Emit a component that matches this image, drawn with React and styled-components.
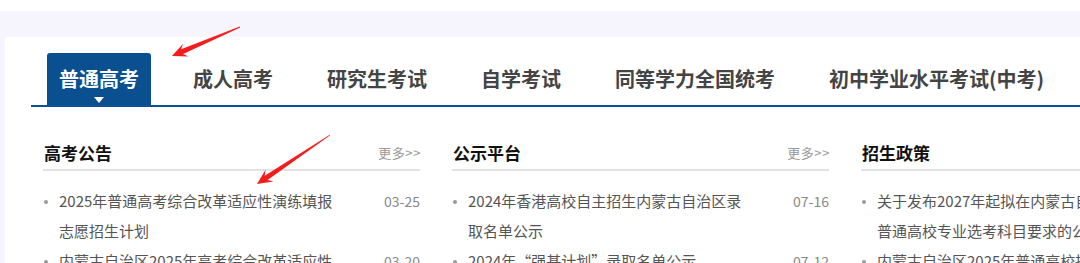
import React from "react";
import styled, { createGlobalStyle } from "styled-components";

const Global = createGlobalStyle`
  html, body { margin: 0; padding: 0; background: #fff; overflow: hidden; }
  body { font-family: "Noto Sans CJK SC", "Noto Sans", sans-serif; }
  * { box-sizing: border-box; }
`;

const Page = styled.div`
  position: relative;
  width: 1080px;
  height: 263px;
  overflow: hidden;
  display: flex;
  flex-direction: column;
`;

const TopStrip = styled.div`
  height: 11px;
  background: #fff;
  flex: none;
`;

const Backdrop = styled.div`
  flex: 1;
  background: #f6f5fd;
  padding: 26px 0 0 5px;
  display: flex;
`;

const Panel = styled.div`
  flex: 1;
  background: #fff;
  padding: 16px 0 0 26px;
  overflow: hidden;
  min-width: 0;
`;

const TabBar = styled.nav`
  display: flex;
  gap: 30px;
  padding-left: 16px;
  border-bottom: 2px solid #0b5195;
`;

const Tab = styled.div`
  height: 52px;
  padding: 12px 12px 0;
  display: flex;
  flex-direction: column;
  align-items: center;
  border-radius: 3px 3px 0 0;
  background: ${(p) => (p.$active ? "#0a4f8f" : "transparent")};
  color: ${(p) => (p.$active ? "#fff" : "#444")};
  font-size: 20px;
  font-weight: 700;
  line-height: 28px;
  white-space: nowrap;
`;

const Caret = styled.span`
  margin-top: 4px;
  width: 0;
  height: 0;
  border-left: 5px solid transparent;
  border-right: 5px solid transparent;
  border-top: 6px solid #fff;
`;

const Columns = styled.div`
  display: grid;
  grid-template-columns: repeat(3, 377px);
  column-gap: 32px;
  padding: 29px 0 0 12px;
`;

const Column = styled.section``;

const ColumnHead = styled.div`
  display: flex;
  align-items: center;
  justify-content: space-between;
  height: 35px;
  padding-left: 1px;
  border-bottom: 2px solid #e3e3e3;
`;

const ColumnTitle = styled.h3`
  margin: 0;
  font-size: 17px;
  font-weight: 700;
  color: #111;
  line-height: 30px;
`;

const More = styled.span`
  font-size: 13px;
  color: #999;
  letter-spacing: 0.6px;
  margin-right: -1px;
`;

const List = styled.ul`
  list-style: none;
  margin: 15px 0 0;
  padding: 0;
`;

const Item = styled.li`
  display: flex;
  align-items: flex-start;
  line-height: 30px;
`;

const Dot = styled.span`
  flex: none;
  width: 4px;
  height: 4px;
  border-radius: 50%;
  background: #9a9a9a;
  margin: 14px 11px 0 1px;
`;

const Title = styled.span`
  width: 283px;
  font-size: 15px;
  color: #555;
`;

const Date = styled.span`
  margin-left: auto;
  font-size: 14px;
  color: #888;
  white-space: nowrap;
`;

const Overlay = styled.svg`
  position: absolute;
  left: 0;
  top: 0;
  pointer-events: none;
`;

const tabs = [
  "普通高考",
  "成人高考",
  "研究生考试",
  "自学考试",
  "同等学力全国统考",
  "初中学业水平考试(中考)",
];

const columns = [
  {
    title: "高考公告",
    items: [
      ["2025年普通高考综合改革适应性演练填报志愿招生计划", "03-25"],
      ["内蒙古自治区2025年高考综合改革适应性演练实施方案", "03-20"],
    ],
  },
  {
    title: "公示平台",
    items: [
      ["2024年香港高校自主招生内蒙古自治区录取名单公示", "07-16"],
      ["2024年“强基计划”录取名单公示", "07-12"],
    ],
  },
  {
    title: "招生政策",
    items: [
      ["关于发布2027年起拟在内蒙古自治区招生普通高校专业选考科目要求的公告", "03-18"],
      ["内蒙古自治区2025年普通高校招生工作规定", "03-10"],
    ],
  },
];

function arrowPoints(tx, ty, hx, hy) {
  const dx = hx - tx;
  const dy = hy - ty;
  const len = Math.hypot(dx, dy);
  const ux = dx / len;
  const uy = dy / len;
  const nx = -uy;
  const ny = ux;
  const headLen = 15;
  const headW = 7;
  const shaftW = 2.6;
  const bx = hx - ux * headLen;
  const by = hy - uy * headLen;
  const nbx = hx - ux * (headLen - 4);
  const nby = hy - uy * (headLen - 4);
  const pts = [
    [tx + nx * 0.4, ty + ny * 0.4],
    [nbx + nx * shaftW, nby + ny * shaftW],
    [bx + nx * headW, by + ny * headW],
    [hx, hy],
    [bx - nx * headW, by - ny * headW],
    [nbx - nx * shaftW, nby - ny * shaftW],
    [tx - nx * 0.4, ty - ny * 0.4],
  ];
  return pts.map((p) => p.map((v) => v.toFixed(1)).join(",")).join(" ");
}

export default function App() {
  return (
    <>
      <Global />
      <Page>
        <TopStrip />
        <Backdrop>
          <Panel>
            <TabBar>
              {tabs.map((t, i) => (
                <Tab key={t} $active={i === 0}>
                  {t}
                  {i === 0 && <Caret />}
                </Tab>
              ))}
            </TabBar>
            <Columns>
              {columns.map((c) => (
                <Column key={c.title}>
                  <ColumnHead>
                    <ColumnTitle>{c.title}</ColumnTitle>
                    <More>更多&gt;&gt;</More>
                  </ColumnHead>
                  <List>
                    {c.items.map(([title, date]) => (
                      <Item key={title}>
                        <Dot />
                        <Title>{title}</Title>
                        <Date>{date}</Date>
                      </Item>
                    ))}
                  </List>
                </Column>
              ))}
            </Columns>
          </Panel>
        </Backdrop>
        <Overlay width="1080" height="263" viewBox="0 0 1080 263">
          <polygon points={arrowPoints(240, 27, 172, 56)} fill="#f41c1c" />
          <polygon points={arrowPoints(330, 135, 257, 184)} fill="#f41c1c" />
        </Overlay>
      </Page>
    </>
  );
}
